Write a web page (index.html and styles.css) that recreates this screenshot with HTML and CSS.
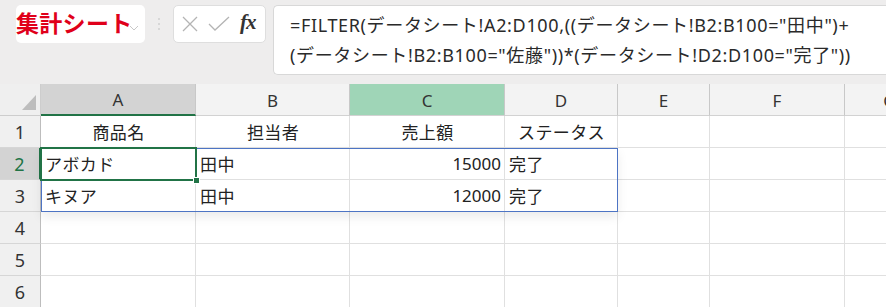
FILE: index.html
```html
<!DOCTYPE html>
<html lang="ja">
<head>
<meta charset="utf-8">
<title>集計シート</title>
<link rel="stylesheet" href="styles.css">
</head>
<body>
<div class="app">
  <div class="topbar">
    <div class="namebox">
      <span class="title">集計シート</span>
      <svg class="chev" width="10" height="6" viewBox="0 0 10 6"><path d="M1 1 L5 5 L9 1" fill="none" stroke="#c8c8c8" stroke-width="1"/></svg>
    </div>
    <div class="dots"><span></span><span></span><span></span></div>
    <div class="fxbox">
      <svg class="ico" width="18" height="18" viewBox="0 0 18 18"><path d="M2 2 L16 16 M16 2 L2 16" stroke="#b4b4b4" stroke-width="1.3" fill="none"/></svg>
      <svg class="ico" width="22" height="18" viewBox="0 0 22 18"><path d="M1 9 L7 15 L21 2" stroke="#b4b4b4" stroke-width="1.3" fill="none"/></svg>
      <span class="fx">fx</span>
    </div>
    <div class="formula">=FILTER(データシート!A2:D100,((データシート!B2:B100="田中")+<br>(データシート!B2:B100="佐藤"))*(データシート!D2:D100="完了"))</div>
  </div>
  <div class="sheet">
    <div class="grid">
      <div class="hd corner"><span class="tri"></span></div>
      <div class="hd col sel">A</div>
      <div class="hd col">B</div>
      <div class="hd col hl">C</div>
      <div class="hd col">D</div>
      <div class="hd col">E</div>
      <div class="hd col">F</div>
      <div class="hd col">G</div>

      <div class="hd row">1</div>
      <div class="c ctr">商品名</div>
      <div class="c ctr">担当者</div>
      <div class="c ctr">売上額</div>
      <div class="c ctr">ステータス</div>
      <div class="c"></div>
      <div class="c"></div>
      <div class="c"></div>

      <div class="hd row rsel">2</div>
      <div class="c">アボカド</div>
      <div class="c">田中</div>
      <div class="c num">15000</div>
      <div class="c">完了</div>
      <div class="c"></div>
      <div class="c"></div>
      <div class="c"></div>

      <div class="hd row">3</div>
      <div class="c">キヌア</div>
      <div class="c">田中</div>
      <div class="c num">12000</div>
      <div class="c">完了</div>
      <div class="c"></div>
      <div class="c"></div>
      <div class="c"></div>

      <div class="hd row">4</div>
      <div class="c"></div><div class="c"></div><div class="c"></div><div class="c"></div><div class="c"></div><div class="c"></div><div class="c"></div>

      <div class="hd row">5</div>
      <div class="c"></div><div class="c"></div><div class="c"></div><div class="c"></div><div class="c"></div><div class="c"></div><div class="c"></div>

      <div class="hd row">6</div>
      <div class="c"></div><div class="c"></div><div class="c"></div><div class="c"></div><div class="c"></div><div class="c"></div><div class="c"></div>
    </div>
    <div class="range"></div>
    <div class="active"><span class="handle"></span></div>
  </div>
</div>
</body>
</html>
```

FILE: styles.css
```css
* { box-sizing: border-box; }
html, body {
  margin: 0;
  padding: 0;
  background: #ffffff;
  width: 886px;
  height: 307px;
  overflow: hidden;
  font-family: "Noto Sans", "Noto Sans CJK JP", sans-serif;
  color: #222;
}
.app {
  width: 886px;
  height: 307px;
  display: flex;
  flex-direction: column;
}
.topbar {
  height: 84px;
  flex: none;
  background: #eeeded;
  display: flex;
  align-items: flex-start;
  padding-top: 5px;
  padding-left: 16px;
  overflow: hidden;
}
.namebox {
  width: 129px;
  height: 38px;
  background: #fff;
  border-radius: 5px;
  position: relative;
  display: flex;
  align-items: center;
  flex: none;
}
.title {
  font-family: "Noto Sans CJK JP", sans-serif;
  font-weight: 700;
  font-size: 23px;
  color: #e0001a;
  letter-spacing: 0.3px;
  line-height: 1;
  margin-top: -4px;
}
.chev {
  position: absolute;
  right: 6px;
  top: 20px;
}
.dots {
  width: 28px;
  height: 38px;
  display: flex;
  flex-direction: column;
  align-items: center;
  justify-content: center;
  gap: 3px;
  flex: none;
}
.dots span {
  width: 2px;
  height: 2px;
  background: #cfcfcf;
  border-radius: 1px;
}
.fxbox {
  width: 93px;
  height: 38px;
  background: #fff;
  border-radius: 5px;
  border: 1px solid #dedede;
  display: flex;
  align-items: center;
  padding-left: 7px;
  gap: 9px;
  flex: none;
}
.fx {
  font-family: "Liberation Serif", "DejaVu Serif", serif;
  font-style: italic;
  font-weight: 700;
  font-size: 21px;
  color: #333;
  letter-spacing: -1px;
  margin-left: 1px;
  margin-top: -3px;
}
.formula {
  margin-left: 7px;
  flex: none;
  width: 640px;
  height: 70px;
  background: #fff;
  border: 1px solid #d8d8d8;
  border-right: none;
  border-radius: 5px 0 0 5px;
  padding: 4px 0 0 16px;
  font-family: "Noto Sans", "Noto Sans CJK JP", sans-serif;
  font-size: 18px;
  line-height: 30px;
  color: #2a2a2a;
  white-space: nowrap;
  letter-spacing: 0.65px;
}
.sheet {
  position: relative;
  flex: 1;
  overflow: hidden;
}
.grid {
  display: grid;
  grid-template-columns: 41px 155px 154px 155px 113px 92px 135px 90px;
  grid-template-rows: repeat(7, 32px);
}
.hd {
  background: #f3f3f3;
  color: #333;
  font-size: 17px;
  display: flex;
  align-items: center;
  justify-content: center;
}
.corner {
  position: relative;
  border-right: 1px solid #cdcdcd;
  border-bottom: 1px solid #cdcdcd;
  background: #efefef;
}
.tri {
  position: absolute;
  right: 4px;
  bottom: 5px;
  width: 0;
  height: 0;
  border-left: 14px solid transparent;
  border-bottom: 15px solid #bdbdbd;
}
.col {
  border-right: 1px solid #c8c8c8;
  border-bottom: 1px solid #d2d2d2;
  padding-top: 1px;
}
.col.sel {
  background: #d3d3d3;
  border-bottom: 2px solid #217346;
}
.col.hl {
  background: #9fd5b7;
}
.row {
  border-right: 1px solid #bdbdbd;
  border-bottom: 1px solid #d6d6d6;
  background: #f0f0f0;
  font-size: 18px;
}
.row.rsel {
  background: #d3d3d3;
  color: #217346;
  border-right: 2px solid #217346;
}
.c {
  border-right: 1px solid #e0e0e0;
  border-bottom: 1px solid #e0e0e0;
  font-family: "Noto Sans CJK JP", sans-serif;
  font-size: 17px;
  color: #222;
  display: flex;
  align-items: center;
  padding: 0 3px 1px 4px;
  white-space: nowrap;
  background: #fff;
  letter-spacing: 0.4px;
}
.c.ctr { justify-content: center; }
.c.num {
  justify-content: flex-end;
  font-family: "Noto Sans", sans-serif;
  font-size: 17px;
  letter-spacing: 0;
}
.range {
  position: absolute;
  left: 41px;
  top: 64px;
  width: 577px;
  height: 64px;
  border: 1.5px solid #4d74c4;
  box-shadow: 0 5px 10px rgba(0, 0, 0, 0.08);
  pointer-events: none;
}
.active {
  position: absolute;
  left: 40px;
  top: 63px;
  width: 157px;
  height: 34px;
  border: 2px solid #217346;
}
.handle {
  position: absolute;
  right: -5px;
  bottom: -5px;
  width: 7px;
  height: 7px;
  background: #217346;
  border: 1px solid #fff;
}
```
